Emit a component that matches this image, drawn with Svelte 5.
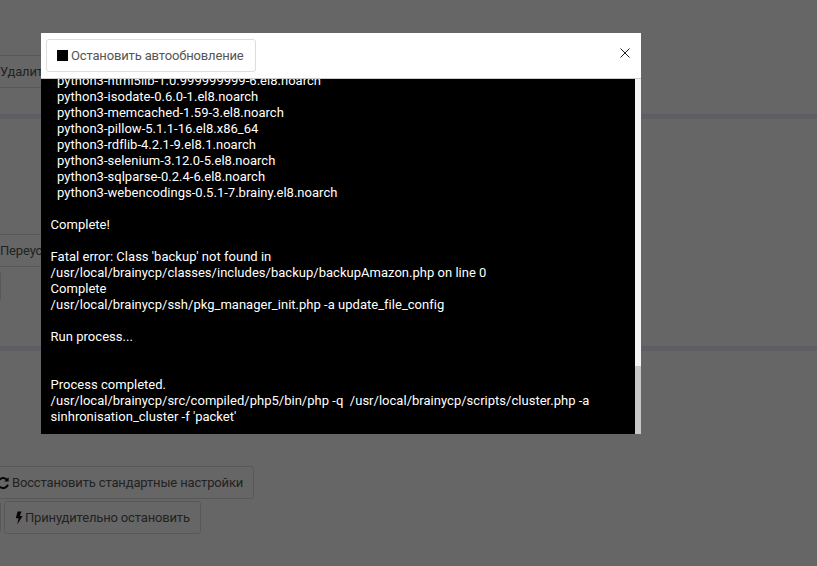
<script>
    const log = `  python3-html5lib-1.0.999999999-6.el8.noarch
  python3-isodate-0.6.0-1.el8.noarch
  python3-memcached-1.59-3.el8.noarch
  python3-pillow-5.1.1-16.el8.x86_64
  python3-rdflib-4.2.1-9.el8.1.noarch
  python3-selenium-3.12.0-5.el8.noarch
  python3-sqlparse-0.2.4-6.el8.noarch
  python3-webencodings-0.5.1-7.brainy.el8.noarch

Complete!

Fatal error: Class 'backup' not found in
/usr/local/brainycp/classes/includes/backup/backupAmazon.php on line 0
Complete
/usr/local/brainycp/ssh/pkg_manager_init.php -a update_file_config

Run process...


Process completed.
/usr/local/brainycp/src/compiled/php5/bin/php -q  /usr/local/brainycp/scripts/cluster.php -a sinhronisation_cluster -f 'packet'`;
</script>

<div class="page">
    <section class="block first">
        <button class="btn">Удалить</button>
    </section>
    <div class="band"></div>
    <section class="block second">
        <button class="btn">Переустановить</button>
        <div class="stub"></div>
    </section>
    <div class="band"></div>
    <section class="block third">
        <button class="btn restore">
            <svg class="ico" viewBox="0 0 12 14" width="12" height="14">
                <path d="M10.2 4.2A5 5 0 1 0 10.9 8.6" fill="none" stroke="#111" stroke-width="2" />
                <path d="M11.6 1.2V5.6H7.2Z" fill="#111" />
            </svg>
            Восстановить стандартные настройки
        </button>
        <div class="row">
            <div class="stub"></div>
            <button class="btn force">
                <svg class="ico" viewBox="0 0 8 14" width="8" height="14">
                    <path d="M2.6 0.5H6.6L4.8 4.9H7.6L2.2 13.6L3.6 7.3H0.8Z" fill="#111" />
                </svg>
                Принудительно остановить
            </button>
        </div>
    </section>
</div>

<div class="overlay">
    <div class="modal">
        <header class="modal-head">
            <button class="btn stop"><span class="square"></span>Остановить автообновление</button>
            <svg class="close" viewBox="0 0 10 10" width="10" height="10">
                <path d="M0.5 0.5L9.5 9.5M9.5 0.5L0.5 9.5" stroke="#222" stroke-width="1" fill="none" />
            </svg>
        </header>
        <div class="modal-body">
            <pre class="console">{log}</pre>
            <div class="track"><div class="thumb"></div></div>
        </div>
    </div>
</div>

<style>
    :global(body) {
        margin: 0;
        background: #fff;
        overflow: hidden;
    }

    .page {
        height: 566px;
        overflow: hidden;
        font-family: Roboto, "Liberation Sans", sans-serif;
        font-size: 13px;
        color: #555;
    }

    .btn {
        display: inline-flex;
        align-items: center;
        gap: 3px;
        height: 33px;
        box-sizing: border-box;
        padding: 0 10px;
        font: inherit;
        letter-spacing: -0.15px;
        color: #555;
        background: #fff;
        border: 1px solid #ddd;
        border-radius: 3px;
        white-space: nowrap;
    }

    .block {
        display: flex;
        flex-direction: column;
        align-items: flex-start;
        margin-left: -11px;
    }

    .first {
        padding-top: 55px;
        height: 59px;
    }

    .second {
        padding-top: 115px;
        height: 112px;
    }

    .second .stub {
        margin-top: 3px;
    }

    .third {
        padding-top: 115px;
        gap: 2px;
    }

    .stub {
        width: 12px;
        height: 32px;
        box-sizing: border-box;
        border: 1px solid #ddd;
        border-radius: 3px;
        background: #fff;
    }

    .band {
        height: 5px;
        background: #ebebfa;
    }

    .restore {
        margin-left: -3px;
    }

    .force {
        gap: 2px;
        letter-spacing: -0.16px;
    }

    .row {
        display: flex;
        gap: 3px;
    }

    .ico {
        flex: none;
    }

    .overlay {
        position: fixed;
        inset: 0;
        background: rgba(0, 0, 0, 0.6);
    }

    .modal {
        position: absolute;
        left: 41px;
        top: 33px;
        width: 600px;
        height: 401px;
        display: flex;
        flex-direction: column;
        background: #fff;
        font-family: Roboto, "Liberation Sans", sans-serif;
        font-size: 13px;
    }

    .modal-head {
        flex: none;
        height: 46px;
        box-sizing: border-box;
        display: flex;
        align-items: center;
        justify-content: space-between;
        padding: 0 11px 0 5px;
        border-bottom: 1px solid #ccc;
    }

    .stop {
        width: 210px;
        gap: 3px;
    }

    .close {
        margin-bottom: 6px;
    }

    .square {
        width: 11px;
        height: 11px;
        background: #000;
    }

    .modal-body {
        flex: 1;
        min-height: 0;
        display: flex;
    }

    .console {
        flex: 1;
        min-width: 0;
        margin: 0;
        padding: 10px 10px 9px 9.6px;
        overflow: hidden;
        display: flex;
        flex-direction: column;
        justify-content: flex-end;
        background: #000;
        color: #fff;
        font: 13px/16px Roboto, "Liberation Sans", sans-serif;
        letter-spacing: 0.02px;
        white-space: pre-wrap;
    }

    .track {
        flex: none;
        width: 6px;
        display: flex;
        flex-direction: column;
        justify-content: flex-end;
        background: #f4f4f4;
    }

    .thumb {
        height: 68px;
        background: #c8c8c8;
    }
</style>
